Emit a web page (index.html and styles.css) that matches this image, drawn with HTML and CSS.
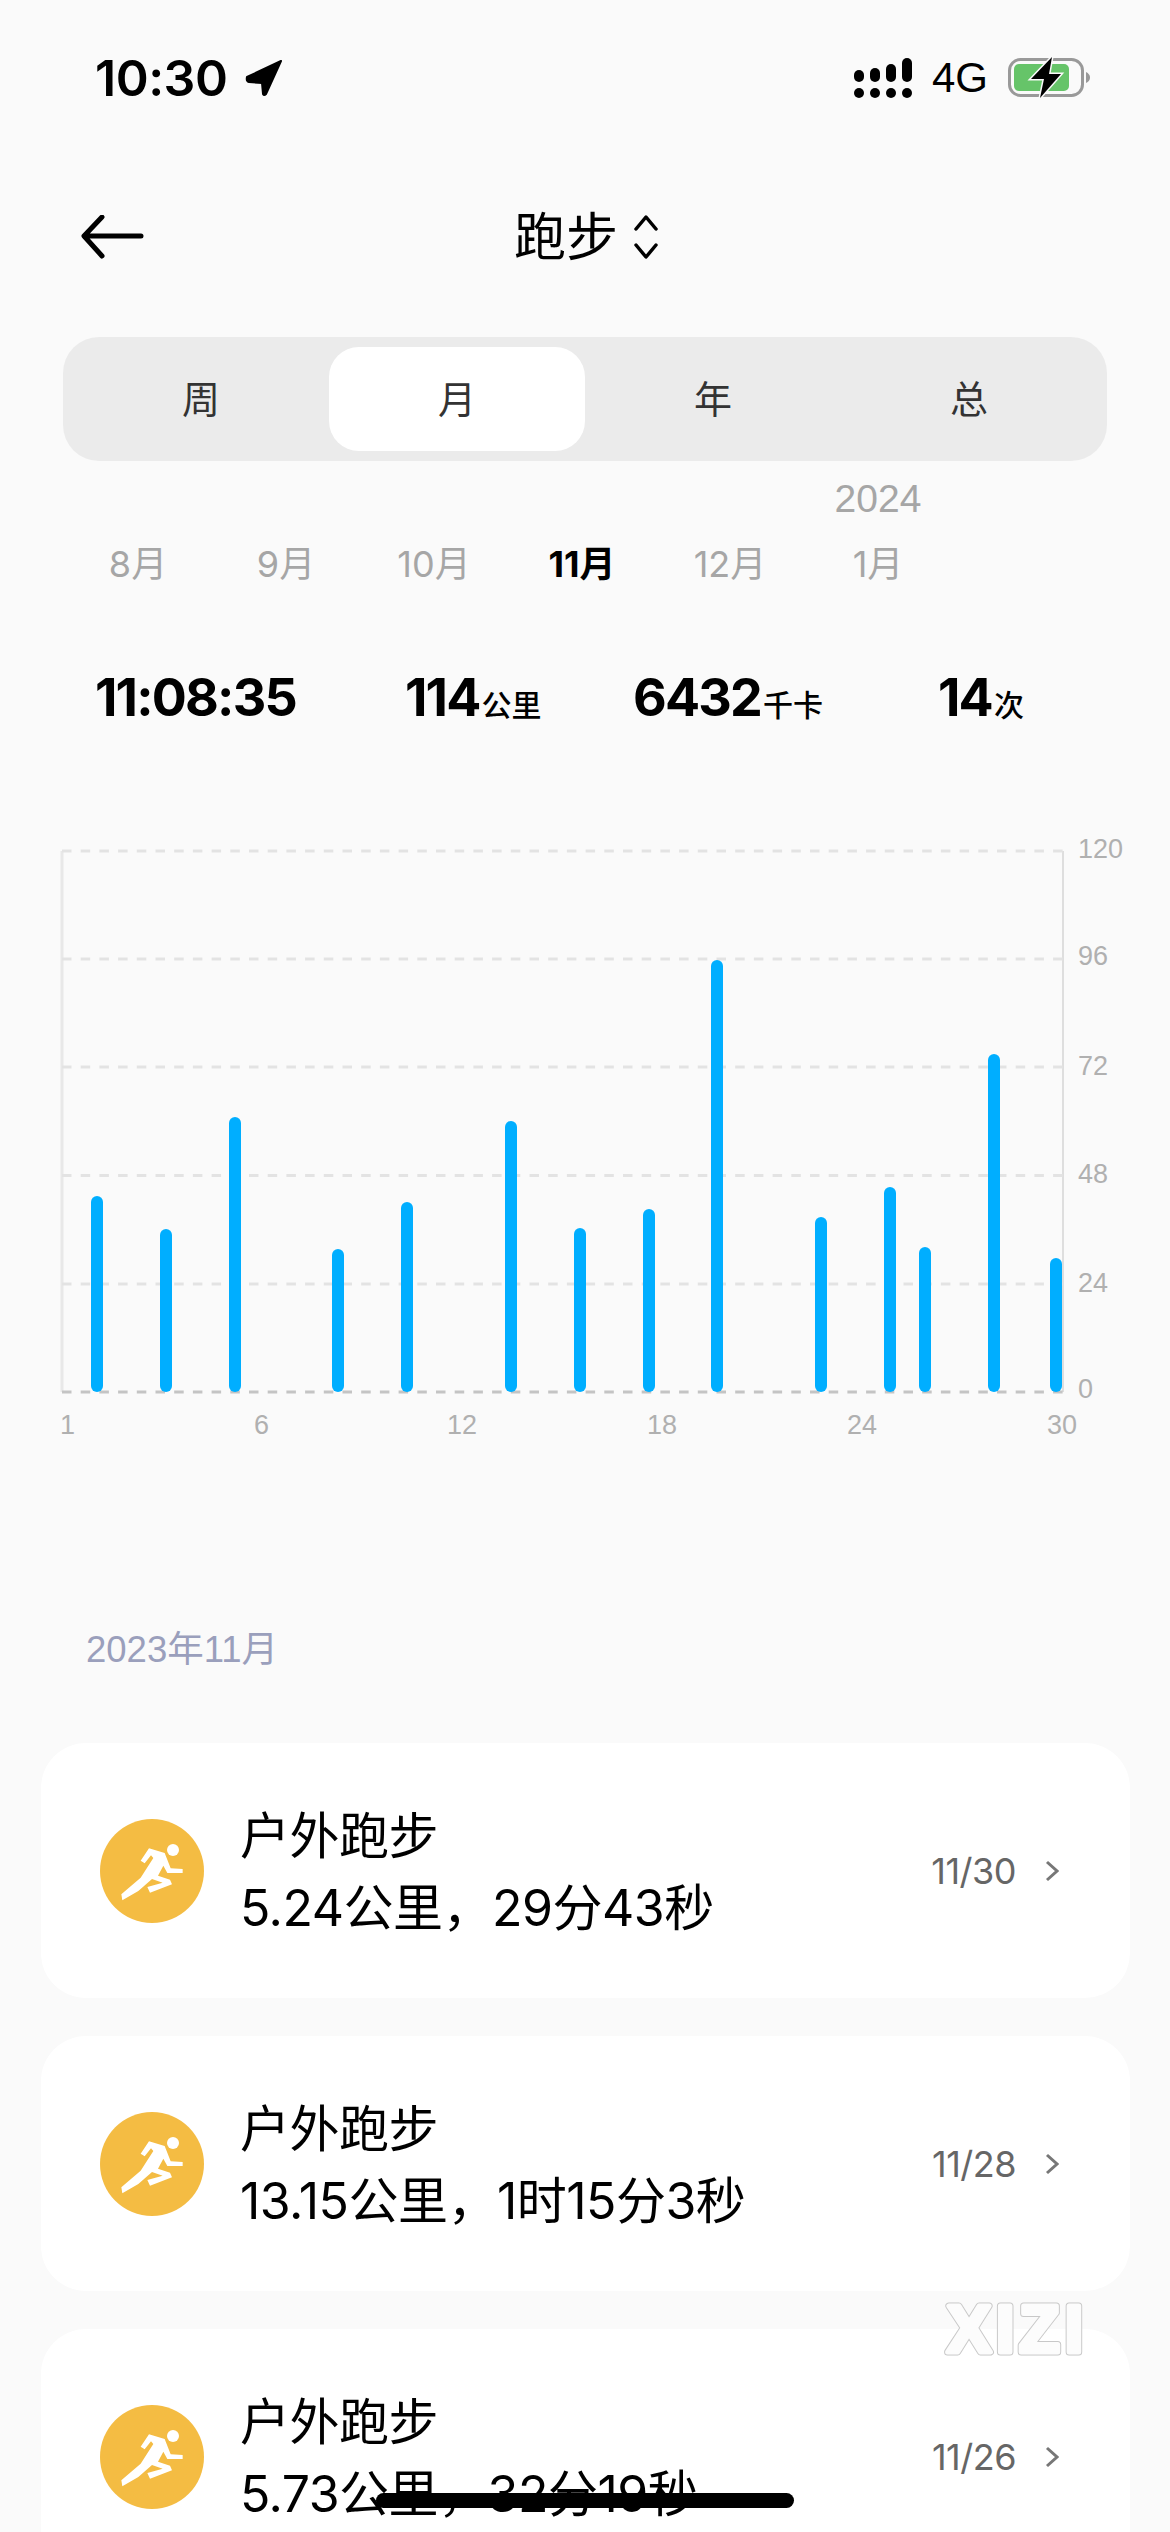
FILE: index.html
```html
<!DOCTYPE html>
<html lang="zh-CN">

<head>
    <meta charset="UTF-8">
    <meta name="viewport" content="width=device-width, initial-scale=1.0">
    <title>跑步</title>
    <link rel="stylesheet" href="styles.css">
</head>

<body>
    <svg class="icon-defs" width="0" height="0">
        <symbol id="runner" viewBox="90 88 312 312">
            <circle cx="309" cy="181" r="18" fill="#fff"></circle>
            <path fill="#fff" d="M237 176 L284 190 L302 236 L338 238 L338 250 L292 250 L280 228 L264 258 L300 270 L306 284 L240 309 L232 292 L278 279 L246 268 L205 304 L157 332 L154 314 L212 264 L250 205 L243 197 L224 221 L212 213 Z"></path>
        </symbol>
    </svg>

    <div class="status-bar">
        <div class="status-left">
            <span class="clock">10:30</span>
            <svg class="location" viewBox="0 0 38 38">
                <path d="M36 2 L2 18 Q1 22 4 23 L17 24 L18 35 Q19 37 21 35 Z"></path>
            </svg>
        </div>
        <div class="status-right">
            <svg class="signal" viewBox="0 0 58 42">
                <rect x="0" y="13" width="10" height="12" rx="5"></rect>
                <rect x="16" y="11" width="10" height="14" rx="5"></rect>
                <rect x="32" y="7" width="10" height="18" rx="5"></rect>
                <rect x="48" y="1" width="10" height="24" rx="5"></rect>
                <rect x="0" y="31" width="10" height="10" rx="5"></rect>
                <rect x="16" y="31" width="10" height="10" rx="5"></rect>
                <rect x="32" y="31" width="10" height="10" rx="5"></rect>
                <rect x="48" y="31" width="10" height="10" rx="5"></rect>
            </svg>
            <span class="network">4G</span>
            <svg class="battery" viewBox="0 0 84 44">
                <rect class="battery-shell" x="2.5" y="3.5" width="73" height="36" rx="11"></rect>
                <rect class="battery-level" x="7" y="8" width="55" height="27" rx="5"></rect>
                <path class="battery-nub" d="M79 16 L79 27 Q83 25 83 21.5 Q83 18 79 16 Z"></path>
                <path class="battery-bolt" d="M45 1 L24 23 L37 23 L33 42 L54 18 L42 18 Z"></path>
            </svg>
        </div>
    </div>

    <div class="nav-bar">
        <svg class="back-arrow" viewBox="0 0 64 44">
            <path d="M61 21 L5 21 M22 2 L4 21 L22 41"></path>
        </svg>
        <div class="nav-title">
            <span class="nav-label">跑步</span>
            <svg class="updown" viewBox="0 0 26 44">
                <path d="M3 14 L13 2 L23 14 M3 30 L13 42 L23 30"></path>
            </svg>
        </div>
    </div>

    <div class="range-tabs">
        <div class="range-tab">周</div>
        <div class="range-tab active">月</div>
        <div class="range-tab">年</div>
        <div class="range-tab">总</div>
    </div>

    <div class="month-strip">
        <div class="month">8月</div>
        <div class="month">9月</div>
        <div class="month">10月</div>
        <div class="month current">11月</div>
        <div class="month">12月</div>
        <div class="month"><span class="year">2024</span>1月</div>
    </div>

    <div class="stats">
        <div class="stat"><span class="stat-value">11:08:35</span></div>
        <div class="stat"><span class="stat-value">114</span><span class="stat-unit">公里</span></div>
        <div class="stat"><span class="stat-value">6432</span><span class="stat-unit">千卡</span></div>
        <div class="stat"><span class="stat-value">14</span><span class="stat-unit">次</span></div>
    </div>

    <svg class="chart" viewBox="0 830 1170 620">
        <line class="axis-left" x1="62" y1="851" x2="62" y2="1392"></line>
        <line class="axis-right" x1="1063" y1="851" x2="1063" y2="1392"></line>

        <line class="grid-line" x1="62" y1="851" x2="1063" y2="851"></line>
        <line class="grid-line" x1="62" y1="959" x2="1063" y2="959"></line>
        <line class="grid-line" x1="62" y1="1067" x2="1063" y2="1067"></line>
        <line class="grid-line" x1="62" y1="1175.5" x2="1063" y2="1175.5"></line>
        <line class="grid-line" x1="62" y1="1284" x2="1063" y2="1284"></line>
        <line class="grid-line base" x1="62" y1="1392" x2="1063" y2="1392"></line>

        <rect class="bar" x="91" y="1196" width="12" height="196" rx="6"></rect>
        <rect class="bar" x="160" y="1229" width="12" height="163" rx="6"></rect>
        <rect class="bar" x="229" y="1117" width="12" height="275" rx="6"></rect>
        <rect class="bar" x="332" y="1249" width="12" height="143" rx="6"></rect>
        <rect class="bar" x="401" y="1202" width="12" height="190" rx="6"></rect>
        <rect class="bar" x="505" y="1121" width="12" height="271" rx="6"></rect>
        <rect class="bar" x="574" y="1228" width="12" height="164" rx="6"></rect>
        <rect class="bar" x="643" y="1209" width="12" height="183" rx="6"></rect>
        <rect class="bar" x="711" y="960" width="12" height="432" rx="6"></rect>
        <rect class="bar" x="815" y="1217" width="12" height="175" rx="6"></rect>
        <rect class="bar" x="884" y="1187" width="12" height="205" rx="6"></rect>
        <rect class="bar" x="919" y="1247" width="12" height="145" rx="6"></rect>
        <rect class="bar" x="988" y="1054" width="12" height="338" rx="6"></rect>
        <rect class="bar" x="1050" y="1258" width="12" height="134" rx="6"></rect>

        <text class="tick" x="1078" y="858">120</text>
        <text class="tick" x="1078" y="965">96</text>
        <text class="tick" x="1078" y="1075">72</text>
        <text class="tick" x="1078" y="1183">48</text>
        <text class="tick" x="1078" y="1292">24</text>
        <text class="tick" x="1078" y="1398">0</text>

        <text class="tick" x="60" y="1434">1</text>
        <text class="tick" x="254" y="1434">6</text>
        <text class="tick" x="447" y="1434">12</text>
        <text class="tick" x="647" y="1434">18</text>
        <text class="tick" x="847" y="1434">24</text>
        <text class="tick" x="1047" y="1434">30</text>
    </svg>

    <div class="section-title">2023年11月</div>

    <div class="record-list">
        <div class="record">
            <svg class="record-icon"><use href="#runner"></use></svg>
            <div class="record-text">
                <div>户外跑步</div>
                <div>5.24公里，29分43秒</div>
            </div>
            <div class="record-date">11/30</div>
            <svg class="chevron" viewBox="0 0 14 22"><path d="M2 2 L12 11 L2 20"></path></svg>
        </div>
        <div class="record">
            <svg class="record-icon"><use href="#runner"></use></svg>
            <div class="record-text">
                <div>户外跑步</div>
                <div>13.15公里，1时15分3秒</div>
            </div>
            <div class="record-date">11/28</div>
            <svg class="chevron" viewBox="0 0 14 22"><path d="M2 2 L12 11 L2 20"></path></svg>
        </div>
        <div class="record">
            <svg class="record-icon"><use href="#runner"></use></svg>
            <div class="record-text">
                <div>户外跑步</div>
                <div>5.73公里，32分19秒</div>
            </div>
            <div class="record-date">11/26</div>
            <svg class="chevron" viewBox="0 0 14 22"><path d="M2 2 L12 11 L2 20"></path></svg>
        </div>
    </div>

    <svg class="watermark" viewBox="0 0 180 80">
        <text class="watermark-edge" x="17" y="62">XIZI</text>
        <text class="watermark-fill" x="17" y="62">XIZI</text>
    </svg>

    <div class="home-indicator"></div>
</body>

</html>
```

FILE: styles.css
```css
* {
    margin: 0;
    padding: 0;
    box-sizing: border-box;
}

html,
body {
    height: 100vh;
    overflow: hidden;
}

body {
    position: relative;
    background: #fafafa;
    color: #000;
    font-family: 'Liberation Sans', 'Noto Sans CJK SC', sans-serif;
}

.icon-defs {
    position: absolute;
}

/* Status bar */
.status-bar {
    display: flex;
    justify-content: space-between;
    align-items: center;
    height: 156px;
    padding: 0 79px 0 95px;
}

.status-left {
    display: flex;
    align-items: center;
    gap: 18px;
}

.clock {
    font-family: 'Inter', 'Liberation Sans', sans-serif;
    font-size: 50px;
    font-weight: 600;
    letter-spacing: -0.5px;
}

.location {
    width: 38px;
    height: 38px;
    stroke: #000;
    stroke-width: 2;
    stroke-linejoin: round;
}

.status-right {
    display: flex;
    align-items: center;
}

.signal {
    width: 58px;
    height: 42px;
}

.network {
    margin: 0 19px 0 20px;
    font-size: 42px;
}

.battery {
    width: 84px;
    height: 44px;
}

.battery-shell {
    fill: none;
    stroke: #999;
    stroke-width: 3;
}

.battery-level {
    fill: #66c469;
}

.battery-nub {
    fill: #999;
}

.battery-bolt {
    fill: #000;
    stroke: #fafafa;
    stroke-width: 3;
    paint-order: stroke;
}

/* Nav */
.nav-bar {
    position: relative;
    display: flex;
    justify-content: center;
    align-items: center;
    height: 162px;
}

.back-arrow {
    position: absolute;
    left: 80px;
    top: 59px;
    width: 64px;
    height: 44px;
    fill: none;
    stroke: #000;
    stroke-width: 5;
    stroke-linecap: round;
    stroke-linejoin: round;
}

.nav-title {
    display: flex;
    align-items: center;
    gap: 15px;
    margin-left: 3px;
    font-size: 52px;
}

.nav-label {
    padding-bottom: 8px;
}

.updown {
    width: 26px;
    height: 44px;
    fill: none;
    stroke: #000;
    stroke-width: 3.5;
    stroke-linecap: round;
    stroke-linejoin: round;
}

/* Week / month / year tabs */
.range-tabs {
    display: grid;
    grid-template-columns: repeat(4, 1fr);
    height: 124px;
    margin: 19px 63px 0;
    padding: 10px;
    background: #ebebeb;
    border-radius: 36px;
}

.range-tab {
    display: flex;
    justify-content: center;
    align-items: center;
    padding-bottom: 6px;
    font-size: 38px;
    color: #333;
}

.range-tab.active {
    background: #fff;
    border-radius: 30px;
}

/* Month strip */
.month-strip {
    display: grid;
    grid-template-columns: repeat(6, 148px);
    align-items: end;
    height: 125px;
    padding-left: 64px;
}

.month {
    display: flex;
    flex-direction: column;
    align-items: center;
    gap: 21px;
    height: 44px;
    font-family: 'Inter', 'Noto Sans CJK SC', sans-serif;
    font-size: 36px;
    line-height: 44px;
    color: #a6a6a6;
}

.month:last-child {
    height: auto;
}

.month.current {
    font-weight: 700;
    color: #000;
}

.year {
    font-family: 'Liberation Sans', sans-serif;
    font-size: 39px;
}

/* Totals */
.stats {
    display: grid;
    grid-template-columns: 310px 228px 305px auto;
    margin-top: 80px;
    padding-left: 95px;
}

.stat {
    display: flex;
    align-items: baseline;
    gap: 2px;
}

.stat-value {
    font-family: 'Inter', 'Liberation Sans', sans-serif;
    font-size: 52px;
    line-height: 64px;
    font-weight: 700;
    letter-spacing: -1.8px;
}

.stat-unit {
    font-size: 30px;
    font-weight: 500;
}

/* Chart */
.chart {
    display: block;
    width: 1170px;
    height: 620px;
    margin-top: 100px;
}

.grid-line {
    stroke: #e3e3e3;
    stroke-width: 3;
    stroke-dasharray: 9.5 9.2;
}

.grid-line.base {
    stroke: #c4c4c4;
}

.axis-left {
    stroke: #e8e8e8;
    stroke-width: 3;
}

.axis-right {
    stroke: #dedede;
    stroke-width: 2;
}

.bar {
    fill: #00aeff;
}

.tick {
    font-size: 27px;
    fill: #b0b0b0;
}

/* Records */
.section-title {
    margin-top: 178px;
    padding-left: 86px;
    font-size: 36.5px;
    line-height: 44px;
    color: #9a9fbc;
}

.record-list {
    display: flex;
    flex-direction: column;
    gap: 38px;
    margin: 71px 40px 0 41px;
}

.record {
    display: flex;
    flex-shrink: 0;
    align-items: center;
    height: 255px;
    padding: 0 71px 0 59px;
    background: #fff;
    border-radius: 45px;
}

.record-icon {
    flex-shrink: 0;
    width: 104px;
    height: 104px;
    margin-right: 36px;
    background: #f4bc43;
    border-radius: 50%;
}

.record-text {
    flex: 1;
    padding-top: 3px;
    font-family: 'Inter', 'Noto Sans CJK SC', sans-serif;
    font-size: 50px;
    line-height: 72px;
    letter-spacing: -0.5px;
}

.record-date {
    margin-right: 29px;
    font-family: 'Inter', 'Liberation Sans', sans-serif;
    font-size: 36px;
    letter-spacing: -0.5px;
    color: #666;
}

.chevron {
    width: 14px;
    height: 22px;
    fill: none;
    stroke: #777;
    stroke-width: 3;
}

/* Overlays */
.watermark {
    position: absolute;
    left: 930px;
    top: 2290px;
    width: 180px;
    height: 80px;
}

.watermark text {
    font-size: 66px;
    font-weight: 700;
    letter-spacing: 5px;
    stroke-linejoin: round;
}

.watermark-edge {
    fill: #c8c8c8;
    stroke: #c8c8c8;
    stroke-width: 7;
}

.watermark-fill {
    fill: #fcfcfc;
    stroke: #fcfcfc;
    stroke-width: 5;
}

.home-indicator {
    position: absolute;
    left: 376px;
    top: 2493px;
    width: 418px;
    height: 15px;
    background: #000;
    border-radius: 8px;
}
```
